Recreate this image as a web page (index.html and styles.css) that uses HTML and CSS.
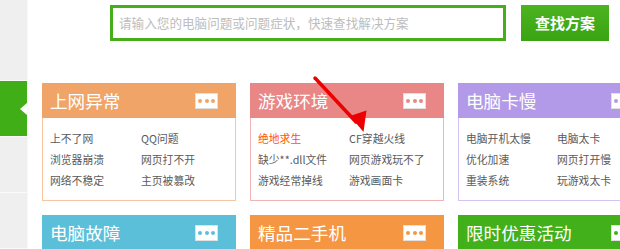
FILE: index.html
```html
<!DOCTYPE html>
<html lang="zh-CN">
<head>
    <meta charset="UTF-8">
    <title>电脑问题</title>
    <link rel="stylesheet" href="styles.css">
</head>
<body>
<div class="page">
    <!-- 左側欄 -->
    <div class="side">
        <div class="side-item first"></div>
        <div class="side-item active"></div>
        <div class="side-item"></div>
        <div class="side-item"></div>
    </div>

    <div class="main">
        <!-- 搜索 -->
        <div class="search">
            <div class="search-input">请输入您的电脑问题或问题症状，快速查找解决方案</div>
            <div class="search-btn">查找方案</div>
        </div>

        <!-- 分類卡片 -->
        <div class="cards">
            <div class="card orange">
                <div class="card-head"><span>上网异常</span><i class="more"><b></b><b></b><b></b></i></div>
                <ul class="card-body">
                    <li>上不了网</li><li>QQ问题</li>
                    <li>浏览器崩溃</li><li>网页打不开</li>
                    <li>网络不稳定</li><li>主页被篡改</li>
                </ul>
            </div>
            <div class="card pink">
                <div class="card-head"><span>游戏环境</span><i class="more"><b></b><b></b><b></b></i></div>
                <ul class="card-body">
                    <li class="hot">绝地求生</li><li>CF穿越火线</li>
                    <li>缺少**.dll文件</li><li>网页游戏玩不了</li>
                    <li>游戏经常掉线</li><li>游戏画面卡</li>
                </ul>
            </div>
            <div class="card purple">
                <div class="card-head"><span>电脑卡慢</span><i class="more"><b></b><b></b><b></b></i></div>
                <ul class="card-body">
                    <li>电脑开机太慢</li><li>电脑太卡</li>
                    <li>优化加速</li><li>网页打开慢</li>
                    <li>重装系统</li><li>玩游戏太卡</li>
                </ul>
            </div>
            <div class="card blue">
                <div class="card-head"><span>电脑故障</span><i class="more"><b></b><b></b><b></b></i></div>
            </div>
            <div class="card amber">
                <div class="card-head"><span>精品二手机</span><i class="more"><b></b><b></b><b></b></i></div>
            </div>
            <div class="card green">
                <div class="card-head"><span>限时优惠活动</span><i class="more"><b></b><b></b><b></b></i></div>
            </div>
        </div>
    </div>
</div>

<!-- 紅色箭頭標註 -->
<svg class="arrow" width="620" height="249" viewBox="0 0 620 249">
    <line x1="315" y1="78" x2="356" y2="122" stroke="#ee0000" stroke-width="3.5" stroke-linecap="round"/>
    <polygon points="363.5,132 350,116 366.5,110.5" fill="#ee0000"/>
</svg>
</body>
</html>
```

FILE: styles.css
```css
/* 基本 */
html, body {
    margin: 0;
    overflow: hidden;
}
body {
    font-family: "Noto Sans CJK SC", "Liberation Sans", sans-serif;
    background: #fff;
    width: 620px;
    height: 249px;
}
.page {
    display: flex;
    height: 249px;
    overflow: hidden;
}
/* 左側欄 */
.side {
    width: 27px;
    flex: none;
    border-right: 1px solid #f7f7f7;
}
.side-item {
    position: relative;
    height: 55px;
    background: #efefef;
    border-bottom: 1px solid #fafafa;
}
.side-item.first {
    height: 80px;
}
.side-item.active {
    background: #3fae17;
}
.side-item.active::after {
    content: "";
    position: absolute;
    right: 0;
    top: 22px;
    border-right: 7px solid #fff;
    border-top: 6px solid transparent;
    border-bottom: 6px solid transparent;
}
.main {
    flex: 1;
    min-width: 0;
    overflow: hidden;
    padding-left: 14px;
}
/* 搜索 */
.search {
    display: flex;
    margin: 5px 0 0 68px;
    gap: 15px;
}
.search-input {
    width: 384px;
    height: 30px;
    border: 3px solid #47ae1b;
    color: #bdbdbd;
    font-size: 12.6px;
    line-height: 30px;
    padding-left: 6px;
    white-space: nowrap;
}
.search-btn {
    width: 88px;
    height: 36px;
    background: linear-gradient(#4cb421, #3aa313);
    color: #fff;
    font-size: 15px;
    font-weight: bold;
    line-height: 36px;
    text-align: center;
}
/* 卡片 */
.cards {
    margin-top: 42px;
    display: grid;
    grid-template-columns: 194px 194px 194px;
    column-gap: 14px;
    row-gap: 14px;
}
.card-head {
    height: 35px;
    display: flex;
    align-items: center;
    justify-content: space-between;
    padding: 0 18px 0 8px;
    color: #fff;
    font-size: 17.6px;
}
.more {
    width: 21px;
    height: 14px;
    background: #fff;
    border: 1px solid rgba(0, 0, 0, 0.12);
    display: flex;
    align-items: center;
    justify-content: center;
    gap: 2.6px;
}
.more b {
    width: 4px;
    height: 4px;
    border-radius: 50%;
}
.card-body {
    list-style: none;
    margin: 0;
    padding: 10px 0 9px 7px;
    display: grid;
    grid-template-columns: 91px 91px;
    border: 1px solid;
    border-top: none;
}
.card-body li {
    font-size: 10.8px;
    line-height: 21px;
    color: #5a5a5a;
    white-space: nowrap;
}
.card-body li.hot {
    color: #ff5400;
}
/* 顏色 */
.orange .card-head { background: #f0a467; }
.orange .more b { background: #f0a467; }
.orange .card-body { border-color: #f7c6a0; }
.pink .card-head { background: #e98686; }
.pink .more b { background: #e98686; }
.pink .card-body { border-color: #f1b3b3; }
.purple .card-head { background: #b39ae8; }
.purple .more b { background: #b39ae8; }
.purple .card-body { border-color: #d2c3f3; }
.blue .card-head { background: #5bbfda; }
.blue .more b { background: #5bbfda; }
.amber .card-head { background: #f59643; }
.amber .more b { background: #f59643; }
.green .card-head { background: #42b01a; }
.green .more b { background: #42b01a; }
/* 箭頭 */
.arrow {
    position: absolute;
    left: 0;
    top: 0;
    pointer-events: none;
}
```
